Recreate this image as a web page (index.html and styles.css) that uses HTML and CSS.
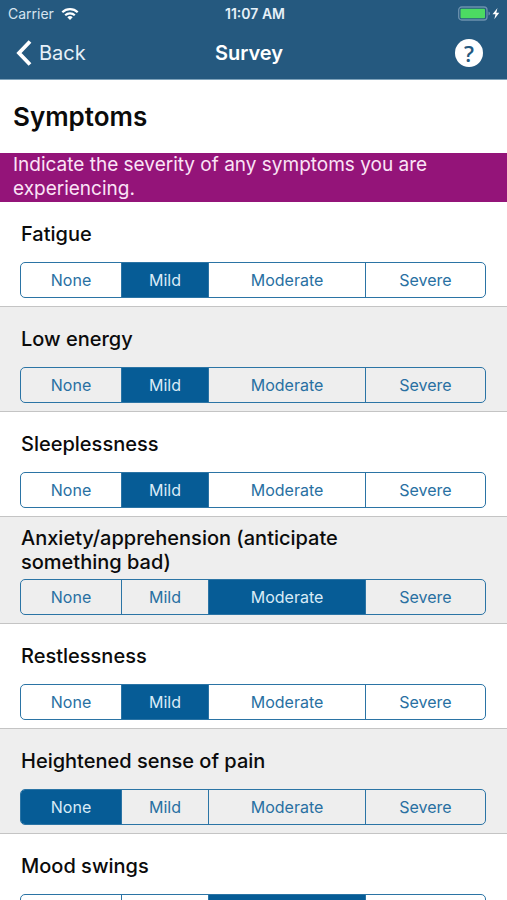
FILE: index.html
```
<!DOCTYPE html>
<html lang="en">
<head>
<meta charset="utf-8">
<meta name="viewport" content="width=device-width, initial-scale=1">
<title>Survey</title>
<link rel="stylesheet" href="styles.css">
</head>
<body>
<header class="top">
  <div class="status">
    <div class="carrier">Carrier
      <svg width="18" height="14" viewBox="0 0 18 14" aria-hidden="true"><g fill="none" stroke="#fff" stroke-width="2.2"><path d="M1.3 5.2a11 11 0 0 1 15.4 0"/><path d="M4.2 8.3a6.8 6.8 0 0 1 9.6 0"/></g><path d="M6.3 10.3a3.8 3.8 0 0 1 5.4 0L9 13z" fill="#fff"/></svg>
    </div>
    <div class="time">11:07 AM</div>
    <svg class="battery" width="44" height="16" viewBox="0 0 44 16" aria-hidden="true"><rect x="0.7" y="1" width="28.300" height="13" rx="3" fill="none" stroke="#6c91ae" stroke-width="1.3"/><rect x="2.500" y="2.800" width="24.500" height="9.400" rx="1" fill="#4cdb62"/><path d="M30.500 5.500v4q1.500-.6 1.500-2t-1.500-2z" fill="#6c91ae"/><path d="M39.500 2l-5 6.300h3l-1.200 5 5-6.600h-3z" fill="#fff"/></svg>
  </div>
  <nav class="nav">
    <a class="back" href="#"><svg width="17" height="26" viewBox="0 0 17 26" aria-hidden="true"><path d="M15 1.500L4 13l11 11.500" fill="none" stroke="#fff" stroke-width="3.800"/></svg>Back</a>
    <h1 class="title">Survey</h1>
    <button class="help" type="button" aria-label="Help">?</button>
  </nav>
</header>
<main class="content">
  <h2 class="heading">Symptoms</h2>
  <p class="notice">Indicate the severity of any symptoms you are experiencing.</p>
  <form class="list">
    <section class="row" role="radiogroup" aria-labelledby="q1">
      <div class="question"><h3 id="q1">Fatigue</h3></div>
      <div class="segments">
        <label><input type="radio" name="fatigue">None</label><label><input type="radio" name="fatigue" checked>Mild</label><label><input type="radio" name="fatigue">Moderate</label><label><input type="radio" name="fatigue">Severe</label>
      </div>
    </section>
    <section class="row" role="radiogroup" aria-labelledby="q2">
      <div class="question"><h3 id="q2">Low energy</h3></div>
      <div class="segments">
        <label><input type="radio" name="energy">None</label><label><input type="radio" name="energy" checked>Mild</label><label><input type="radio" name="energy">Moderate</label><label><input type="radio" name="energy">Severe</label>
      </div>
    </section>
    <section class="row" role="radiogroup" aria-labelledby="q3">
      <div class="question"><h3 id="q3">Sleeplessness</h3></div>
      <div class="segments">
        <label><input type="radio" name="sleep">None</label><label><input type="radio" name="sleep" checked>Mild</label><label><input type="radio" name="sleep">Moderate</label><label><input type="radio" name="sleep">Severe</label>
      </div>
    </section>
    <section class="row" role="radiogroup" aria-labelledby="q4">
      <div class="question"><h3 id="q4">Anxiety/apprehension (anticipate something bad)</h3></div>
      <div class="segments">
        <label><input type="radio" name="anxiety">None</label><label><input type="radio" name="anxiety">Mild</label><label><input type="radio" name="anxiety" checked>Moderate</label><label><input type="radio" name="anxiety">Severe</label>
      </div>
    </section>
    <section class="row" role="radiogroup" aria-labelledby="q5">
      <div class="question"><h3 id="q5">Restlessness</h3></div>
      <div class="segments">
        <label><input type="radio" name="restless">None</label><label><input type="radio" name="restless" checked>Mild</label><label><input type="radio" name="restless">Moderate</label><label><input type="radio" name="restless">Severe</label>
      </div>
    </section>
    <section class="row" role="radiogroup" aria-labelledby="q6">
      <div class="question"><h3 id="q6">Heightened sense of pain</h3></div>
      <div class="segments">
        <label><input type="radio" name="pain" checked>None</label><label><input type="radio" name="pain">Mild</label><label><input type="radio" name="pain">Moderate</label><label><input type="radio" name="pain">Severe</label>
      </div>
    </section>
    <section class="row" role="radiogroup" aria-labelledby="q7">
      <div class="question"><h3 id="q7">Mood swings</h3></div>
      <div class="segments">
        <label><input type="radio" name="mood">None</label><label><input type="radio" name="mood">Mild</label><label><input type="radio" name="mood" checked>Moderate</label><label><input type="radio" name="mood">Severe</label>
      </div>
    </section>
  </form>
</main>
</body>
</html>
```
FILE: styles.css
```
* { box-sizing: border-box; }

body {
  margin: 0;
  height: 100vh;
  display: flex;
  flex-direction: column;
  overflow: hidden;
  background: #fff;
  color: #0b0b0b;
  font-family: Inter, "Liberation Sans", sans-serif;
}

h1, h2, h3, p { margin: 0; }

.top {
  flex: none;
  background: #25597f;
  color: #fff;
  border-bottom: 1px solid #7fa3bb;
}

.status, .nav {
  display: grid;
  grid-template-columns: 1fr auto 1fr;
  align-items: center;
}

.status {
  height: 27px;
  padding: 0 5px 0 8px;
  font-size: 14px;
}

.carrier {
  display: flex;
  align-items: center;
  gap: 7px;
  color: #d6e4ef;
}

.time {
  font-weight: 600;
  color: #e6f0f8;
}

.battery { justify-self: end; }

.nav {
  height: 52px;
  padding: 0 24px 0 15px;
}

.back {
  display: flex;
  align-items: center;
  gap: 7px;
  color: #e6f0f8;
  font-size: 20px;
  text-decoration: none;
}

.title {
  font-size: 20px;
  font-weight: 600;
}

.help {
  justify-self: end;
  width: 28px;
  height: 28px;
  padding: 0;
  border: 0;
  border-radius: 50%;
  background: #fff;
  color: #25597f;
  font: 600 22px/28px "Open Sans", sans-serif;
}

.content {
  flex: 1;
  min-height: 0;
  overflow-y: auto;
  scrollbar-width: none;
}

.heading {
  padding: 21px 13px 20px;
  font-size: 26px;
  line-height: 32px;
  font-weight: 600;
}

.notice {
  padding: 0 13px 1px;
  background: #941479;
  color: #fbe3f6;
  font-size: 19px;
  line-height: 24px;
}

.row {
  padding: 0 21px 8px 20px;
  border-bottom: 1px solid #c4c4c4;
}

.row:nth-child(even) { background: #eee; }

.question {
  display: flex;
  align-items: center;
  min-height: 60px;
  max-width: 360px;
  padding: 9px 1px 5px;
}

.question h3 {
  font-size: 20px;
  line-height: 24px;
  font-weight: 500;
}

.segments {
  display: grid;
  grid-template-columns: 100fr 87fr 157fr 120fr;
  height: 36px;
  border: 1px solid #2b74a5;
  border-radius: 5px;
  overflow: hidden;
}

.segments label {
  display: flex;
  align-items: center;
  justify-content: center;
  position: relative;
  color: #2870a2;
  font-size: 16px;
}

.segments label + label { border-left: 1px solid #2b74a5; }

.segments label:has(:checked) {
  background: #065c96;
  color: #d9ebf7;
}

.segments input {
  position: absolute;
  inset: 0;
  margin: 0;
  opacity: 0;
}
```
